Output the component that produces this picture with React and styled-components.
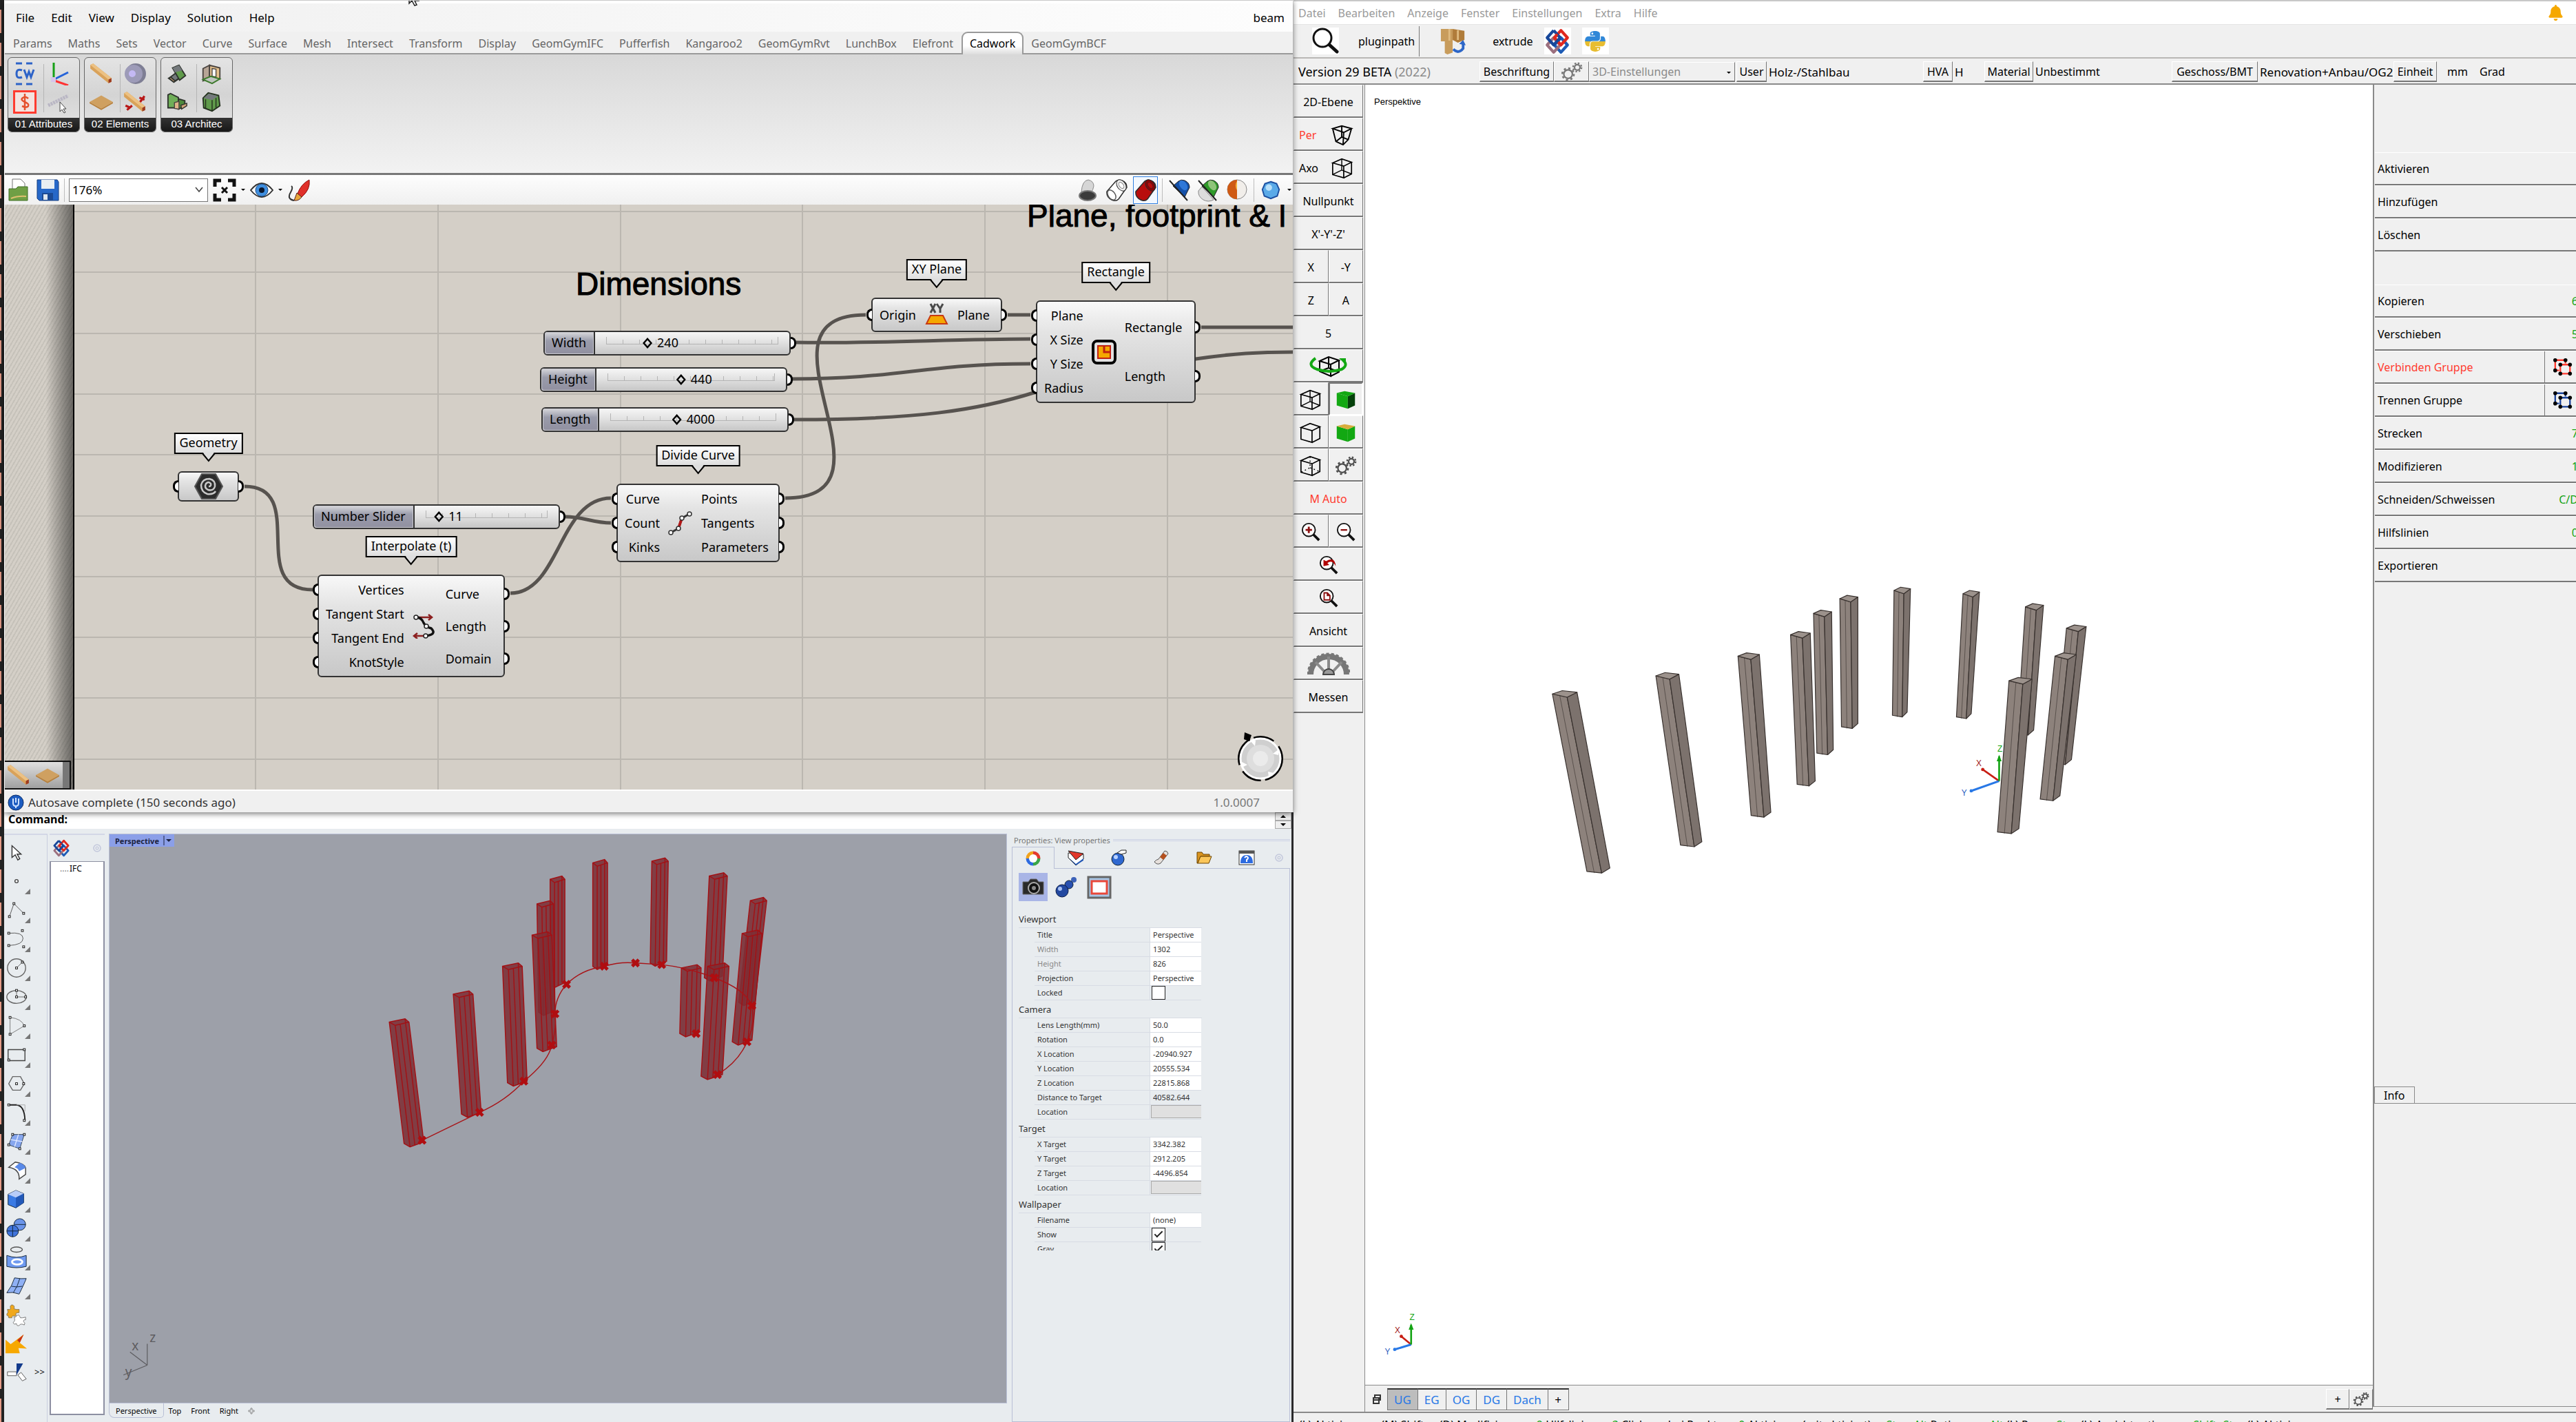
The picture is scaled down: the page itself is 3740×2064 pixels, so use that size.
import React, { useState } from 'react';
import styled, { createGlobalStyle } from 'styled-components';
import { FaPython, FaBell } from 'react-icons/fa';

const Global = createGlobalStyle`
  *, *::before, *::after { box-sizing: border-box; }
  html, body { margin: 0; }
  body { font-family: "Noto Sans", "Open Sans", sans-serif; color: #000; background: #f0f0f0; overflow: hidden; }
  button, input, select { font: inherit; color: inherit; margin: 0; padding: 0; border: 0; border-radius: 0; background: none; outline: none; }
  button { cursor: default; white-space: nowrap; }
  svg { display: block; flex: none; }
`;

const Desktop = styled.main`
  display: grid;
  grid-template-columns: minmax(0, 1878fr) minmax(0, 1862fr);
  height: 100vh;
  overflow: hidden;
`;

const LeftHalf = styled.div`
  display: grid;
  grid-template-columns: 6px minmax(0, 1fr);
  grid-template-rows: minmax(0, 1179fr) minmax(0, 885fr);
`;

const Backdrop = styled.div`
  grid-row: 1 / 3;
  background:
    linear-gradient(#232323, #232323) 2px 0 / 4px 100% no-repeat,
    repeating-linear-gradient(#232323 0 14px, #e79c88 14px 48px);
`;

/* ---------- Grasshopper window ---------- */

const GhWindow = styled.section`
  position: relative;
  z-index: 2;
  display: flex;
  flex-direction: column;
  min-height: 0;
  margin-right: 1px;
  background: #f0f0f0;
  border-top: 1px solid #c8c8c8;
  border-left: 1px solid #fff;
  box-shadow: 0 2px 8px rgba(0, 0, 0, 0.55);
`;

const Pointer = styled.svg`
  position: absolute;
  left: 586px;
  top: 0;
`;

const GhMenu = styled.nav`
  display: flex;
  align-items: center;
  height: 45px;
  padding: 0 12px 0 4px;
  border-top: 4px solid #fff;
  background: linear-gradient(90deg, #f0f0f0, #fdfdfd);
  font-size: 17px;
`;

const GhMenuItem = styled.button`
  padding: 0 12px;
`;

const DocName = styled.span`
  margin-left: auto;
`;

const GhTabs = styled.div`
  display: flex;
  align-items: stretch;
  height: 33px;
  padding-left: 1px;
  border-bottom: 2px solid #9a9a9a;
  background: #f0f0f0;
  color: #666;
  font-size: 16px;
`;

const GhTab = styled.button`
  padding: 2px 12px 0 11px;
  ${(p) => p.$active && `
    margin-bottom: -2px;
    padding: 0 10px 2px;
    color: #000;
    background: linear-gradient(#fff 60%, #dcdcdc);
    border: 2px solid #9a9a9a;
    border-bottom: 0;
    border-radius: 9px 9px 0 0;
  `}
`;

const Ribbon = styled.div`
  display: flex;
  align-items: flex-start;
  gap: 6px;
  height: 175px;
  padding: 4px;
  border-bottom: 3px solid #777;
  background: linear-gradient(#d8d8d8, #f2f2f2);
`;

const RibbonGroup = styled.div`
  width: 105px;
  height: 109px;
  border: 1px solid #666;
  border-radius: 6px;
  overflow: hidden;
  background: linear-gradient(#e4e4e4, #d4d4d4 50%, #e4e4e4);
`;

const RibbonIcons = styled.div`
  display: grid;
  grid-template-columns: 1fr 1fr;
  height: 87px;
  padding: 3px 6px 3px 0;
  background: linear-gradient(#b5b5b5, #b5b5b5) center / 1px 70px no-repeat;
`;

const RibbonButton = styled.button`
  display: grid;
  place-items: center;
`;

const RibbonLabel = styled.div`
  height: 21px;
  line-height: 18px;
  background: linear-gradient(#333, #161616);
  color: #fff;
  font-family: "Liberation Sans", sans-serif;
  font-size: 15px;
  text-align: center;
`;

const GhToolbar = styled.div`
  display: flex;
  align-items: center;
  gap: 6px;
  height: 43px;
  padding: 0 2px;
  background: linear-gradient(#fdfdfd, #f0f0f0);
`;

const ToolButton = styled.button`
  display: grid;
  place-items: center;
  width: 36px;
  height: 40px;
  ${(p) => p.$on && 'border: 1px solid #2f7fe0; background: #f3f8ff;'}
`;

const Spacer = styled.div`
  flex: 1;
`;

const VRule = styled.i`
  width: 1px;
  height: 34px;
  background: #bdbdbd;
`;

const Caret = styled.i`
  width: 0;
  height: 0;
  border: 3px solid transparent;
  border-top-color: #000;
  border-bottom: 0;
`;

const ZoomField = styled.div`
  position: relative;
  width: 202px;
  height: 34px;
  select {
    width: 100%;
    height: 100%;
    padding-left: 4px;
    appearance: none;
    border: 1px solid #777;
    background: #fff;
    font-size: 17px;
  }
  svg { position: absolute; right: 7px; top: 12px; pointer-events: none; }
`;

const Canvas = styled.div`
  position: relative;
  flex: 1;
  min-height: 0;
  overflow: hidden;
  background: #d4cfc7;
`;

const Margin = styled.div`
  position: absolute;
  inset: 0 auto 0 0;
  width: 101px;
  border-right: 2px solid #000;
  background:
    linear-gradient(90deg, transparent 60%, rgba(0, 0, 0, 0.5)),
    repeating-linear-gradient(120deg, #d4cfc7 0 3px, #c6c2ba 3px 5px);
`;

const Drawing = styled.svg`
  position: absolute;
  inset: 0;
  width: 100%;
  height: 100%;
`;

const Scribble = styled.div`
  position: absolute;
  left: ${(p) => p.$x}px;
  top: ${(p) => p.$y}px;
  font: 46px/50px "Liberation Sans", sans-serif;
  -webkit-text-stroke: 1px #000;
  white-space: nowrap;
`;

const Body = styled.div`
  position: absolute;
  left: ${(p) => p.$x}px;
  top: ${(p) => p.$y}px;
  width: ${(p) => p.$w}px;
  height: ${(p) => p.$h}px;
  display: flex;
  padding: 2px 0;
  border: 2px solid #333;
  border-radius: 6px;
  background: linear-gradient(#f8f8f8, #e4e4e4 30%, #c8c8c8);
  font-size: 18px;
  line-height: 24px;
`;

const Ports = styled.div`
  display: flex;
  flex-direction: column;
  flex: ${(p) => (p.$out ? 1 : 'none')};
  min-width: 0;
`;

const Port = styled.div`
  position: relative;
  flex: 1;
  display: flex;
  align-items: center;
  justify-content: ${(p) => (p.$out ? 'flex-start' : 'flex-end')};
  padding-left: ${(p) => (p.$out ? 0 : 10)}px;
  white-space: nowrap;
  &::after {
    content: '';
    position: absolute;
    ${(p) => (p.$out ? 'right: -9px; border-radius: 0 9px 9px 0;' : 'left: -9px; border-radius: 9px 0 0 9px;')}
    top: calc(50% - 9px);
    width: 8px;
    height: 18px;
    border: 3px solid #000;
    ${(p) => (p.$out ? 'border-left-width: 0;' : 'border-right-width: 0;')}
    background: #fff;
  }
`;

const NodeIcon = styled.div`
  align-self: center;
  margin: 0 12px;
`;

const Tag = styled.div`
  position: absolute;
  left: 50%;
  bottom: calc(100% + 27px);
  transform: translateX(-50%);
  height: 31px;
  padding: 0 6px;
  border: 2px solid #000;
  background: linear-gradient(#fff, #dedede);
  line-height: 25px;
  white-space: nowrap;
  svg { position: absolute; left: calc(50% - 10px); top: 27px; }
`;

const SliderBox = styled.div`
  position: absolute;
  left: ${(p) => p.$x}px;
  top: ${(p) => p.$y}px;
  width: 359px;
  height: 36px;
  display: flex;
  border: 2px solid #333;
  border-radius: 6px;
  background: linear-gradient(#f6f6f6, #e2e2e2 45%, #c6c6c6);
  font-size: 18px;
  line-height: 31px;
  &::after {
    content: '';
    position: absolute;
    right: -10px;
    top: 7px;
    width: 8px;
    height: 18px;
    border: 3px solid #000;
    border-left: 0;
    border-radius: 0 9px 9px 0;
    background: #fff;
  }
`;

const SliderName = styled.label`
  padding: 0 11px 0 10px;
  border-right: 2px solid #333;
  border-radius: 4px 0 0 4px;
  background: linear-gradient(#d8d8dc, #9a9cab 40%, #9190a0);
  box-shadow: inset 0 0 0 1px #c9c9cf;
`;

const SliderTrack = styled.div`
  position: relative;
  flex: 1;
  margin: 0 9px;
  &::before {
    content: '';
    position: absolute;
    left: 7px;
    right: 7px;
    top: 7px;
    height: 11px;
    border: 1px solid #b4b4b4;
    border-top: 0;
    background: repeating-linear-gradient(90deg, transparent 0 23px, #b4b4b4 23px 24px) 0 100% / 100% 6px no-repeat;
  }
`;

const Range = styled.input`
  position: relative;
  display: block;
  width: 100%;
  height: 32px;
  appearance: none;
  background: transparent;
  &::-webkit-slider-thumb {
    appearance: none;
    width: 14px;
    height: 16px;
    background: #000;
    clip-path: polygon(evenodd, 50% 0, 100% 50%, 50% 100%, 0 50%, 50% 0, 50% 24%, 22% 50%, 50% 76%, 78% 50%, 50% 24%);
  }
`;

const SliderValue = styled.output`
  position: absolute;
  top: 0;
  margin-left: 12px;
  padding: 0 2px;
  pointer-events: none;
`;

const Palette = styled.div`
  position: absolute;
  left: 0;
  bottom: 0;
  display: flex;
  align-items: center;
  gap: 6px;
  width: 96px;
  height: 42px;
  padding: 0 2px;
  border: 2px solid #111;
  border-left: 0;
  background: linear-gradient(90deg, transparent 84px, #777 84px), linear-gradient(#e0e0e0, #a0a0a0);
`;

const GhStatus = styled.footer`
  display: flex;
  align-items: center;
  gap: 6px;
  height: 33px;
  padding: 2px 48px 0 4px;
  border-top: 2px solid #fff;
  background: #f0f0f0;
  color: #333;
  font-size: 17px;
`;

const Version = styled.span`
  margin-left: auto;
  color: #777;
`;

/* ---------- Rhino window ---------- */

const RhWindow = styled.section`
  display: flex;
  flex-direction: column;
  min-height: 0;
  background: #e8ecef;
  border-right: 3px solid #2a2a2c;
`;

const CommandBar = styled.div`
  display: flex;
  height: 24px;
  background: #fff;
  font-size: 16px;
  label { padding-left: 6px; font-weight: bold; line-height: 20px; }
  input { flex: 1; min-width: 0; padding-left: 4px; }
`;

const Spinner = styled.div`
  display: grid;
  width: 24px;
  button {
    display: grid;
    place-items: center;
    border: 1px solid #aaa;
    background: #eee;
  }
`;

const RhMain = styled.div`
  flex: 1;
  display: grid;
  grid-template-columns: 66px 86px minmax(0, 1fr) 413px;
  min-height: 0;
  padding-top: 7px;
`;

const RhTools = styled.div`
  display: flex;
  flex-direction: column;
  margin-right: 3px;
  padding-top: 4px;
  border-top: 2px solid #d3d7e6;
  border-right: 1px solid #c9cede;
`;

const RhTool = styled.button`
  position: relative;
  width: 40px;
  height: 42px;
  padding-left: 2px;
  &::after {
    content: '';
    display: ${(p) => (p.$plain ? 'none' : 'block')};
    position: absolute;
    right: 2px;
    bottom: 2px;
    border: 4px solid #777;
    border-top-color: transparent;
    border-left-color: transparent;
  }
`;

const MoreTools = styled.span`
  position: absolute;
  left: 44px;
  top: 10px;
  font-size: 13px;
`;

const IfcPanel = styled.div`
  display: flex;
  flex-direction: column;
  margin-right: 6px;
  border-top: 2px solid #d3d7e6;
`;

const IfcTab = styled.div`
  position: relative;
  display: flex;
  align-items: center;
  justify-content: space-between;
  height: 38px;
  padding: 0 4px;
`;

const IfcTree = styled.div`
  flex: 1;
  margin-bottom: 10px;
  padding-left: 13px;
  border: 2px solid #8d90a2;
  border-top-width: 1px;
  background: #fff;
  font-size: 12px;
  line-height: 19px;
  &::before { content: '....'; margin-right: 1px; color: #777; }
`;

const RhViewport = styled.div`
  display: flex;
  flex-direction: column;
  min-height: 0;
`;

const RhScene = styled.div`
  position: relative;
  flex: 1;
  border: 1px solid #b9bfd6;
  background: #9da0a9;
`;

const ViewLabel = styled.button`
  position: absolute;
  left: 0;
  top: 0;
  display: flex;
  align-items: center;
  gap: 6px;
  height: 18px;
  padding: 0 4px 0 8px;
  background: #8b9fe8;
  color: #1c2340;
  font-size: 11px;
  font-weight: bold;
`;

const ViewTabs = styled.div`
  display: flex;
  align-items: center;
  height: 27px;
  font-size: 11px;
`;

const ViewTab = styled.button`
  height: 21px;
  margin-bottom: 6px;
  padding: 0 7px;
  ${(p) => p.$active && 'padding: 0 9px; border: 1px solid #b9bfd6; border-top: 0; border-radius: 0 0 5px 8px;'}
`;

const Props = styled.aside`
  display: flex;
  flex-direction: column;
  padding: 0 2px 0 7px;
  color: #333;
  font-size: 11px;
`;

const PropsTitle = styled.div`
  display: flex;
  align-items: center;
  gap: 4px;
  height: 19px;
  padding-left: 3px;
  color: #777;
  &::after { content: ''; flex: 1; height: 3px; border: 1px solid #cdd2e6; border-width: 1px 0; }
`;

const PropsTabs = styled.div`
  display: grid;
  grid-template-columns: repeat(6, 62px) 1fr;
  height: 32px;
`;

const PropsTab = styled.button`
  display: grid;
  place-items: center;
  border-bottom: 1px solid #b9bfd6;
  ${(p) => p.$active && 'border: 1px solid #b9bfd6; border-bottom: 0;'}
`;

const PropsBody = styled.div`
  flex: 1;
  padding-left: 9px;
  border: 1px solid #b9bfd6;
  border-top: 0;
`;

const PropsKinds = styled.div`
  display: flex;
  gap: 6px;
  height: 60px;
  padding-top: 6px;
`;

const Kind = styled.button`
  display: grid;
  place-items: center;
  width: 42px;
  height: 41px;
  background: ${(p) => (p.$on ? '#a9b5e6' : 'none')};
`;

const PropsList = styled.div`
  height: 494px;
  overflow: hidden;
`;

const PropsHead = styled.h3`
  margin: 0;
  width: 266px;
  height: 26px;
  font-size: 13px;
  font-weight: normal;
  line-height: 27px;
  border-bottom: 1px solid #d8dce4;
`;

const PropRow = styled.div`
  display: grid;
  grid-template-columns: 168px 74px;
  width: 242px;
  height: 21px;
  margin-left: 23px;
  border-bottom: 1px solid #d8dce4;
  line-height: 20px;
  label { padding-left: 4px; color: ${(p) => (p.$dim ? '#888' : '#333')}; border-right: 1px solid #d8dce4; }
`;

const PropText = styled.input`
  width: 74px;
  height: 20px;
  padding-left: 4px;
  background: ${(p) => (p.$flat ? 'transparent' : '#fff')};
`;

const PropPush = styled.button`
  height: 19px;
  margin-left: 1px;
  border: 1px solid #aaa;
  border-right: 0;
  background: #e0e0e0;
`;

const PropCheck = styled.input`
  appearance: none;
  width: 20px;
  height: 20px;
  margin-left: 2px;
  border: 1px solid #222;
  background: #fff;
  &:checked::after {
    content: '';
    display: block;
    width: 12px;
    height: 6px;
    margin: 4px 3px;
    border: solid #222;
    border-width: 0 0 2px 2px;
    transform: rotate(-45deg);
  }
`;

/* ---------- cadwork window ---------- */

const CwWindow = styled.section`
  display: flex;
  flex-direction: column;
  min-height: 0;
  background: #f0f0f0;
  font-size: 16px;
`;

const CwMenu = styled.nav`
  display: flex;
  align-items: center;
  gap: 18px;
  height: 36px;
  padding: 0 18px 0 7px;
  border-top: 2px solid #c8c8c8;
  border-bottom: 1px solid #e4e4e4;
  background: #fff;
  color: #9a9a9a;
`;

const CwToolbar = styled.div`
  display: flex;
  align-items: center;
  gap: 16px;
  height: 49px;
  padding-left: 1px;
  border-bottom: 2px solid #b9b7b5;
`;

const CwAction = styled.button`
  display: flex;
  align-items: center;
  gap: ${(p) => p.$gap || 0}px;
  height: 44px;
  padding: ${(p) => p.$pad || '0'};
  ${(p) => p.$rule && 'border-right: 1px solid #777;'}
`;

const Plate = styled.span`
  display: grid;
  place-items: center;
  width: 39px;
  height: 39px;
  background: #fff;
`;

const CwAttributes = styled.div`
  display: flex;
  align-items: center;
  height: 38px;
  padding: 2px 0 0 7px;
  border-bottom: 2px solid #8a8a8a;
`;

const Build = styled.div`
  width: 263px;
  font-size: 18px;
  span { color: #8a8a8a; }
`;

const Bevel = styled.button`
  display: flex;
  align-items: center;
  justify-content: center;
  height: 30px;
  width: ${(p) => p.$w}px;
  padding-top: 1px;
  border: 1px solid #fff;
  border-right-color: #777;
  border-bottom: 2px solid #777;
`;

const AttrValue = styled.span`
  width: ${(p) => p.$w}px;
  padding-left: 3px;
  font-size: ${(p) => (p.$small ? 16 : 17)}px;
  white-space: nowrap;
`;

const Preset = styled.div`
  position: relative;
  width: 214px;
  select {
    width: 212px;
    height: 29px;
    padding-left: 4px;
    appearance: none;
    border: 1px solid #fff;
    border-right-color: #777;
    border-bottom: 2px solid #777;
    color: #8a8a8a;
  }
  i { position: absolute; right: 8px; top: 14px; }
`;

const CwMain = styled.div`
  flex: 1;
  display: grid;
  grid-template-columns: 104px minmax(0, 1fr) 295px;
  min-height: 0;
`;

const CwTools = styled.div`
  display: grid;
  grid-template-columns: 1fr 1fr;
  grid-auto-rows: 48px;
  align-content: start;
  padding-right: 2px;
  border-right: 1px solid #8a8a8a;
`;

const CwTool = styled.button`
  display: flex;
  align-items: center;
  justify-content: ${(p) => (p.$spread ? 'space-between' : 'center')};
  padding: ${(p) => (p.$spread ? '2px 12px 0 7px' : '2px 0 0')};
  grid-column: ${(p) => (p.$half ? 'auto' : 'span 2')};
  color: ${(p) => (p.$red ? '#ff3b2f' : '#000')};
  border: 1px solid #fff;
  border-right-color: #777;
  border-bottom: 2px solid #777;
  ${(p) => p.$pressed && 'border: 2px solid #fff; border-top-color: #777; border-left-color: #777;'}
`;

const CwCenter = styled.div`
  display: flex;
  flex-direction: column;
  min-height: 0;
`;

const CwScene = styled.div`
  position: relative;
  flex: 1;
  background: #fff;
  border-bottom: 1px solid #8a8a8a;
`;

const SceneName = styled.span`
  position: absolute;
  left: 13px;
  top: 17px;
  font: 13px/16px "Liberation Sans", sans-serif;
`;

const Floors = styled.div`
  display: flex;
  align-items: center;
  height: 38px;
  padding: 2px 0 0 10px;
`;

const Floor = styled.button`
  height: 32px;
  min-width: 31px;
  padding: 0 9px;
  border: 1px solid #777;
  border-top: 2px solid #333;
  margin-right: -1px;
  font-size: 17px;
  color: ${(p) => (p.$plus ? '#000' : '#2878e6')};
  background: ${(p) => (p.$active ? '#bdbdbd' : '#f0f0f0')};
`;

const StackIcon = styled.span`
  width: 22px;
`;

const CwCommands = styled.aside`
  display: flex;
  flex-direction: column;
  margin: 0 0 7px 0;
  border-left: 2px solid #8a8a8a;
  border-bottom: 1px solid #8a8a8a;
  overflow: hidden;
`;

const CommandList = styled.div`
  display: grid;
  grid-auto-rows: 48px;
  padding: 98px 0 0 1px;
  width: 310px;
`;

const Command = styled.div`
  display: flex;
  align-items: stretch;
  border-top: 1px solid #fff;
  border-bottom: 2px solid #777;
  button { flex: 1; padding: 1px 0 0 4px; text-align: left; color: ${(p) => (p.$red ? '#ff3b2f' : '#000')}; }
  span { align-self: center; padding-right: 14px; color: #13a313; }
`;

const CommandGap = styled.div``;

const CommandIcon = styled.i`
  display: grid;
  place-items: center;
  width: 63px;
  padding-right: 10px;
  border-left: 1px solid #777;
`;

const Info = styled.div`
  flex: 1;
  display: flex;
  flex-direction: column;
  padding-top: 732px;
`;

const InfoTab = styled.button`
  align-self: flex-start;
  height: 24px;
  padding: 0 13px;
  border: 1px solid #8a8a8a;
  border-bottom: 0;
`;

const InfoBody = styled.div`
  flex: 1;
  border-top: 1px solid #8a8a8a;
`;

const CwStatus = styled.footer`
  display: flex;
  gap: 22px;
  height: 15px;
  padding: 6px 8px 0;
  border-top: 2px solid #8a8a8a;
  overflow: hidden;
  white-space: nowrap;
  line-height: 22px;
  b { color: #13a313; font-weight: normal; }
`;

/* ---------- drawings ---------- */

const Ico = ({ s = 34, vb = '0 0 34 34', children }) => (
  <svg width={s} height={s} viewBox={vb} fill="none" aria-hidden="true">{children}</svg>
);

const Beam = ({ s = 36, saw }) => (
  <Ico s={s}>
    <path d="M2 5l4-2 25 20v5l-4 2L2 10z" fill="#d9a25a" />
    <path d="M2 5l4-2 25 20-4 2z" fill="#ecc183" />
    <path d="M27 25l4-2v5l-4 2z" fill="#9c3a20" />
    {saw && <path d="M4 22l7 3M6 28l7-6M23 11l7 3M24 17l6-8" stroke="#b81818" strokeWidth="3" />}
  </Ico>
);
const Board = ({ s = 36 }) => (
  <Ico s={s}>
    <path d="M1 17L17 8l16 9-16 9z" fill="#cfa060" />
    <path d="M1 17l16 9 16-9v2l-16 9-16-9z" fill="#b8803a" />
  </Ico>
);
const CwMark = () => (
  <Ico>
    <path d="M4 2h9M19 2h9M4 32h9M19 32h9" stroke="#2d63c8" strokeWidth="3" />
    <path d="M13 12q-8-3-8 5t8 5" stroke="#2d63c8" strokeWidth="3" />
    <path d="M16 11l4 11 3-8 3 8 4-11" stroke="#2d63c8" strokeWidth="3" />
  </Ico>
);
const Dollar = () => (
  <Ico>
    <rect x="1.500" y="1.500" width="31" height="31" fill="#f3e3df" stroke="#ff3b2f" strokeWidth="3" />
    <path d="M22 12q-4-4-8-1t3 6 5 6-9 0M17 5v24" stroke="#e5502c" strokeWidth="2.500" />
  </Ico>
);
const Axes = () => (
  <Ico>
    <path d="M10 25V1" stroke="#16a016" strokeWidth="3" />
    <path d="M11 25l20-10" stroke="#2563d9" strokeWidth="3" />
    <path d="M11 27l20 7" stroke="#f33" strokeWidth="3" />
    <rect x="6" y="22" width="7" height="7" fill="#d6c4ea" />
  </Ico>
);
const Rod = () => (
  <Ico>
    <path d="M2 22L31 8" stroke="#b9b6c4" strokeWidth="5" strokeDasharray="3 1" />
    <path d="M19 17v14l3-3 3 5 2-1-3-5h4z" fill="#fff" stroke="#444" />
  </Ico>
);
const Sphere = () => (
  <Ico>
    <circle cx="18" cy="17" r="15" fill="#7e7e94" />
    <circle cx="15" cy="17" r="13" fill="#9d9bb8" />
    <circle cx="13" cy="17" r="5" fill="#c4b9f4" />
  </Ico>
);
const HouseRoof = () => (
  <Ico s={32}>
    <path d="M3 24l9-5 8 5-9 6z" fill="#cfa27a" stroke="#2f332e" strokeWidth="2" />
    <path d="M6 22l8-6 5 8-6 4z" fill="#74797c" stroke="#2f332e" strokeWidth="2" />
    <path d="M9 8l10-4 10 16-9 7z" fill="#5f9a4a" stroke="#2f332e" strokeWidth="2" />
    <path d="M9 8l10-4 5 8-11 3z" fill="#74797c" />
  </Ico>
);
const HouseOpen = () => (
  <Ico s={32}>
    <path d="M4 9l10-5v20L4 28z" fill="#b7a596" stroke="#4b4540" strokeWidth="2" />
    <path d="M14 4l16 4v17l-16-3z" fill="#e4c08c" stroke="#4b4540" strokeWidth="2" />
    <path d="M18 9l6 1v12l-6-1z" fill="#fff" stroke="#4b4540" strokeWidth="1.500" />
    <path d="M4 26l12-5 14 4-12 7z" fill="#bfc4be" stroke="#3d7a2c" strokeWidth="2" />
  </Ico>
);
const HouseWall = () => (
  <Ico s={32}>
    <path d="M2 6l4-2 12 6v16L2 26z" fill="#6fae58" stroke="#2f332e" strokeWidth="2" />
    <path d="M18 12l10 3v9l-10 4z" fill="#4d8a3c" stroke="#2f332e" strokeWidth="2" />
    <path d="M12 18l7-2v12l-7-1z" fill="#e0b48a" stroke="#4b4540" strokeWidth="1.500" />
    <path d="M22 22l9-3v4l-8 5z" fill="#cfa27a" stroke="#2f332e" strokeWidth="1.500" />
  </Ico>
);
const HouseBox = () => (
  <Ico s={32}>
    <path d="M4 11l8-8 16 4 2 16-12 8-13-5z" fill="#5f9a4a" stroke="#24301f" strokeWidth="2" />
    <path d="M5 11l8-7 14 4-9 6z" fill="#74797c" />
    <path d="M18 14v17M8 13v14M24 11v15" stroke="#24301f" strokeWidth="1.500" />
  </Ico>
);
const OpenDoc = () => (
  <Ico>
    <path d="M8 1h12l6 6v18H8z" fill="#fff" stroke="#777" />
    <path d="M3 15h10l3-3h14v20H3z" fill="#6f9f45" stroke="#3f6e25" />
    <path d="M6 29q10-4 22-3" stroke="#e0c070" strokeWidth="2" />
  </Ico>
);
const Save = () => (
  <Ico>
    <path d="M2 2h29l2 3v27H5l-3-3z" fill="#2768c8" stroke="#163e80" />
    <path d="M8 2h19v13H8z" fill="#e9eef2" />
    <path d="M9 21h16v11H9z" fill="#1c4a94" />
    <path d="M11 23h6v8h-6z" fill="#dfe6ee" />
  </Ico>
);
const Extents = () => (
  <Ico>
    <path d="M3 12V3h9M22 3h9v9M31 22v9h-9M12 31H3v-9" stroke="#111" strokeWidth="5" />
    <path d="M13 13l8 8M21 13l-8 8" stroke="#111" strokeWidth="3" />
  </Ico>
);
const Eye = () => (
  <Ico>
    <path d="M1 17Q17-3 33 17 17 37 1 17z" fill="#fff" stroke="#333" strokeWidth="2" />
    <circle cx="17" cy="17" r="9" fill="#3f8fe0" stroke="#17467f" />
    <circle cx="17" cy="17" r="4" fill="#0a1830" />
  </Ico>
);
const Brush = () => (
  <Ico>
    <path d="M15 22Q20 8 32 2q2 14-11 25z" fill="#e0302a" stroke="#8c1010" />
    <path d="M14 21l7 6q-4 6-11 5z" fill="#e8a63a" stroke="#522" />
    <path d="M10 32Q-1 30 5 20q4-7 1-9" stroke="#333" strokeWidth="2" />
  </Ico>
);
const Can = ({ side, cap, hole }) => (
  <Ico s={34}>
    <path d="M3 19L16 4q4-3 9-1 7 3 7 10L20 30q-4 4-10 1-8-4-7-12z" fill={side} stroke="#2c2c2c" strokeWidth="1.500" />
    <ellipse cx="24" cy="10" rx="6" ry="9" transform="rotate(-35 24 10)" fill={cap} stroke="#2c2c2c" />
    <ellipse cx="24" cy="10" rx="3" ry="5" transform="rotate(-35 24 10)" fill={side} stroke="#2c2c2c" strokeOpacity=".6" />
    {hole && <ellipse cx="10" cy="24" rx="5" ry="8" transform="rotate(-35 10 24)" stroke="#555" strokeWidth="1.500" />}
  </Ico>
);
const CutCan = ({ side, cap, rest }) => (
  <Ico s={34}>
    {rest && <path d="M3 18L8 12 25 31q-8 4-15 0-8-5-7-13z" fill="#dcdcdc" stroke="#888" />}
    <path d="M8 11L16 4q4-3 9-1 7 3 7 10L25 27z" fill={side} stroke="#222" />
    <ellipse cx="23" cy="10" rx="5" ry="8" transform="rotate(-35 23 10)" fill={cap} />
    <path d="M3 3l26 29" stroke="#222" strokeWidth="2" />
  </Ico>
);
const Ghost = () => (
  <Ico>
    <path d="M8 20Q9 3 18 2q8 2 8 9-1 6-4 10z" fill="#d6d6d6" stroke="#8a8a8a" />
    <ellipse cx="17" cy="25" rx="12" ry="7" fill="#3b3b3b" stroke="#777" strokeWidth="2" />
  </Ico>
);
const HalfBall = () => (
  <Ico>
    <circle cx="17" cy="16" r="14" fill="#f1eeea" stroke="#888" />
    <path d="M17 2a14 14 0 000 28z" fill="#cf5a14" />
    <path d="M17 4a9 10 0 000 13z" fill="#f6b23c" />
  </Ico>
);
const BlueGem = () => (
  <Ico s={32}>
    <path d="M17 4l9 3 4 9-3 10-10 4-10-4L4 16l4-9z" fill="#5aaae8" stroke="#1c4fa0" strokeWidth="2" />
    <circle cx="14" cy="13" r="5" fill="#b8e0fa" />
  </Ico>
);
const IfcLogo = ({ s = 36 }) => (
  <Ico s={s} vb="0 0 36 36">
    <g strokeWidth="4" strokeLinejoin="round">
      <path d="M23 13l9 10-9 10-9-10z" stroke="#1d5bb5" />
      <path d="M13 13l9 10-9 10-9-10z" stroke="#9b6f7e" />
      <path d="M23 3l9 10-9 10-9-10z" stroke="#e0281e" />
      <path d="M13 3l9 10M13 3L4 13l9 10 9-10" stroke="#17479a" />
      <path d="M14 13l4-5" stroke="#e0281e" />
    </g>
  </Ico>
);
const Gears = ({ s = 36, c = '#4c4c4c' }) => (
  <Ico s={s} vb="0 0 36 36">
    <circle cx="12" cy="22" r="7" stroke={c} strokeWidth="2.500" />
    <circle cx="12" cy="22" r="9.500" stroke={c} strokeWidth="3" strokeDasharray="3.500 3.960" />
    <circle cx="27" cy="11" r="4.500" stroke={c} strokeWidth="2.500" />
    <circle cx="27" cy="11" r="7" stroke={c} strokeWidth="2.500" strokeDasharray="2.750 2.750" />
  </Ico>
);
const Cog = ({ s = 18 }) => (
  <Ico s={s} vb="0 0 18 18">
    <circle cx="9" cy="9" r="6.500" stroke="#c3c8dc" strokeWidth="2" />
    <circle cx="9" cy="9" r="2.500" stroke="#c3c8dc" strokeWidth="1.500" />
  </Ico>
);
const Magnifier = () => (
  <Ico s={39} vb="0 0 39 39">
    <circle cx="15" cy="15" r="13" stroke="#111" strokeWidth="3" />
    <path d="M25 25l11 10" stroke="#111" strokeWidth="5" strokeLinecap="round" />
  </Ico>
);
const Cube = ({ kind = 'wire' }) => {
  const solid = kind === 'green' || kind === 'gold';
  return (
    <Ico s={34} vb="0 0 36 36">
      {solid ? (
        <>
          <path d="M4 8l17 5v19L4 27z" fill="#12a812" />
          <path d="M21 13l11-5v19l-11 5z" fill={kind === 'gold' ? '#12a812' : '#04400a'} />
          <path d="M4 8l12-3 16 3-11 5z" fill={kind === 'gold' ? '#d8ac3c' : '#12a812'} />
        </>
      ) : kind === 'per' ? (
        <path d="M3 8l14-4 15 4-12 6zM3 8l5 20 11 5 8-8 5-17M20 14l-1 19M17 4v17l-9 7M17 21l10 4" stroke="#000" strokeWidth="2" />
      ) : (
        <>
          <path d="M3 10l14-6 15 5-12 6zM3 10v18l17 5V15M32 9v18l-12 6" stroke="#000" strokeWidth="1.800" />
          {kind === 'wire' && <path d="M17 4v17L3 28M17 21l15 6" stroke="#000" strokeWidth="1.500" />}
          {kind === 'dots' && <path d="M17 4v17L3 28M17 21l15 6" stroke="#000" strokeWidth="1.500" strokeDasharray="2 4" />}
        </>
      )}
    </Ico>
  );
};
const Orbit = () => (
  <svg width="58" height="32" viewBox="0 0 58 32" fill="none" aria-hidden="true">
    <path d="M16 8l13-6 15 5-12 6zM16 8v15l16 7V13M44 7v17l-12 6M29 2v16l-13 5M29 18l15 6" stroke="#000" strokeWidth="2" />
    <path d="M10 4Q-4 14 12 20q18 6 36 0 10-6 2-13" stroke="#13a813" strokeWidth="4" />
    <path d="M44 4h10v9z" fill="#13a813" />
  </svg>
);
const Lens = ({ kind }) => (
  <Ico s={28} vb="0 0 30 30">
    <circle cx="12" cy="12" r="10" stroke="#111" strokeWidth="2" fill="#fff" />
    <path d="M19 19l9 9" stroke="#111" strokeWidth="4" />
    {kind === '+' && <path d="M7 12h10M12 7v10" stroke="#8c1010" strokeWidth="3" />}
    {kind === '-' && <path d="M7 12h10" stroke="#8c1010" strokeWidth="2.500" />}
    {kind === 'back' && <path d="M7 7v10l9-2-3-3q8-6 13 5Q25 1 11 9z" fill="#b00000" />}
    {kind === 'page' && <path d="M8 7h5l4 4v7H8zM13 7v4h4" stroke="#8c1010" strokeWidth="2" />}
  </Ico>
);
const SawBlade = () => (
  <svg width="62" height="34" viewBox="0 0 62 34" fill="none" aria-hidden="true">
    <path d="M5 32a26 26 0 0152 0" stroke="#777" strokeWidth="8" />
    <path d="M2 32a29 29 0 0158 0" stroke="#777" strokeWidth="5" strokeDasharray="4 3" />
    <path d="M31 26V6M26 29L12 14M36 29l14-15" stroke="#8a8a8a" strokeWidth="4" />
    <path d="M23 32a8 8 0 0116 0z" fill="#999" stroke="#444" strokeWidth="2" />
  </svg>
);
const GroupIcon = ({ c }) => (
  <Ico s={28} vb="0 0 30 30">
    <path d="M3 4h16v5M3 4v16h6" stroke={c} strokeWidth="2.500" />
    <path d="M11 11h15v14H11z" stroke={c} strokeWidth="2.500" />
    {[[3, 4], [19, 4], [3, 20], [11, 11], [26, 11], [11, 25], [26, 25]].map(([x, y]) => <circle key={`${x}-${y}`} cx={x} cy={y} r="3" fill="#000" />)}
  </Ico>
);
const WoodTool = () => (
  <Ico s={38} vb="0 0 40 40">
    <path d="M1 1h18v36l-8 3-4-2V20H1z" fill="#c89c5c" />
    <path d="M19 1l18 3v14l-10 4-8-4z" fill="#b07c3a" />
    <path d="M14 1v18M27 3v15" stroke="#e0bb80" strokeWidth="3" />
    <path d="M20 32q8 8 15-1V22" stroke="#2c66c8" strokeWidth="4" />
    <path d="M29 24l6-6 4 8z" fill="#2c66c8" />
  </Ico>
);
const Hex = () => (
  <Ico s={42} vb="0 0 42 42">
    <path d="M11 3h20l10 18-10 18H11L1 21z" fill="#2c2c2c" stroke="#555" strokeWidth="2" />
    <path d="M21 21q4 0 3-4-3-4-7 0-3 6 3 9 8 2 10-5 1-9-8-11-10 0-12 9 0 10 9 13 9 1 12-4" stroke="#c9c9c9" strokeWidth="2.500" />
  </Ico>
);
const XyIcon = () => (
  <Ico s={36} vb="0 0 36 36">
    <path d="M9 2l7 13M16 2L9 15M18 2l5 7 4-7M23 9v6" stroke="#4a4a4a" strokeWidth="3" />
    <path d="M9 19h18l6 12H3z" fill="#f5a800" stroke="#c83a12" strokeWidth="2" />
  </Ico>
);
const RectIcon = () => (
  <Ico s={36} vb="0 0 36 36">
    <rect x="2" y="2" width="32" height="32" rx="6" fill="#e2e2e2" stroke="#000" strokeWidth="4" />
    <rect x="9" y="9" width="18" height="18" fill="#f5a800" stroke="#c02010" strokeWidth="2" />
    <path d="M18 9v9h9" stroke="#c02010" strokeWidth="3" />
  </Ico>
);
const DivideIcon = () => (
  <Ico s={36} vb="0 0 36 36">
    <path d="M4 32l11-6 5-15 11-6" stroke="#333" strokeWidth="3" />
    <path d="M15 26l5-15" stroke="#b01818" strokeWidth="4" />
    {[[4, 32], [15, 26], [20, 11], [31, 5]].map(([x, y]) => <circle key={x} cx={x} cy={y} r="3" fill="#fff" stroke="#333" strokeWidth="1.500" />)}
  </Ico>
);
const InterpIcon = () => (
  <Ico s={36} vb="0 0 36 36">
    <path d="M5 5h22M23 1l5 4-5 4M20 32H2M7 28l-5 4 5 4" stroke="#8c2020" strokeWidth="2.500" />
    <path d="M5 5q8 0 11 8 3 6 11 8 9 9-8 11" stroke="#111" strokeWidth="3.500" />
    {[[5, 5], [20, 18], [19, 32]].map(([x, y]) => <circle key={y} cx={x} cy={y} r="3" fill="#fff" stroke="#222" strokeWidth="1.500" />)}
  </Ico>
);
const Compass = ({ x, y }) => (
  <g transform={`translate(${x} ${y})`}>
    <circle r="31" fill="none" stroke="#000" strokeWidth="4" strokeDasharray="42 6 30 10" />
    <circle r="29" fill="#cfcfcf" stroke="#fff" strokeWidth="3" />
    <circle r="20" fill="#dedede" />
    <circle r="11" fill="#ebebeb" />
    <path d="M-23-38l10 4-3 9-8-3z" fill="#000" />
    <path d="M-15-26l8 0-1 8zM26-13l0 8-8-2zM-27 13l0-8 8 4zM12 27l-1-8 8 2z" fill="#fff" />
  </g>
);

/* Rhino side-bar glyphs, on a 34 unit square */
const handles = (pts) => pts.map(([x, y], i) => <rect key={i} x={x - 1.5} y={y - 1.5} width="3" height="3" fill="#fff" stroke="#111" />);
const rhinoTools = [
  ['Select', <path d="M10 7v18l5-4 4 8 3-2-4-7h6z" fill="#fff" stroke="#333" strokeWidth="1.500" />, true],
  ['Point', <circle cx="17" cy="17" r="2.500" fill="#fff" stroke="#444" strokeWidth="1.500" />],
  ['Polyline', <><path d="M6 27l7-20 15 15" stroke="#555" />{handles([[6, 27], [13, 7], [28, 22]])}</>],
  ['Curve', <><path d="M5 8q22-2 22 8t-22 11" stroke="#555" />{handles([[5, 8], [26, 4], [5, 27], [28, 29]])}</>],
  ['Circle', <><circle cx="17" cy="17" r="14" stroke="#666" strokeWidth="1.500" /><path d="M17 17l9-9" stroke="#666" />{handles([[17, 17], [26, 8]])}</>],
  ['Ellipse', <><ellipse cx="17" cy="17" rx="15" ry="10" stroke="#666" strokeWidth="1.500" /><path d="M17 17V7M17 17h14" stroke="#666" />{handles([[17, 17], [17, 7], [31, 17]])}</>],
  ['Arc', <><path d="M7 4q18 2 22 13L7 30z" stroke="#777" />{handles([[7, 4], [29, 17], [7, 30]])}</>],
  ['Rectangle', <><path d="M4 9h26v17H4z" stroke="#444" strokeWidth="1.500" />{handles([[29, 9], [5, 25]])}</>],
  ['Polygon', <><path d="M11 6h12l6 11-6 10H11L5 17z" stroke="#666" strokeWidth="1.500" />{handles([[17, 17], [28, 17]])}</>],
  ['Fillet', <><path d="M5 5h12q12 1 13 23" stroke="#222" strokeWidth="2" /><path d="M17 5h13v10" stroke="#aaa" />{handles([[5, 5], [29, 29]])}</>],
  ['Surface', <><path d="M11 6h18l-7 22L5 22z" fill="#86a6ee" stroke="#345" /><path d="M20 6l-6 19M8 14l18 3" stroke="#dfe8ff" strokeWidth="1.500" />{handles([[11, 6], [29, 6], [22, 28], [5, 22]])}</>],
  ['Loft', <><path d="M5 12l10-8q14 2 16 9v10l-10 7q1-15-16-18z" fill="#fff" stroke="#444" strokeWidth="1.500" /><path d="M14 12l8-7q8 3 9 8l-10 5q-1-4-7-6z" fill="#5a8ae8" /></>],
  ['Box', <><path d="M4 9l12-6 12 5v14l-12 8-12-5z" fill="#3a7ae4" stroke="#123" /><path d="M4 9l12-6 12 5-12 6z" fill="#b8ccf8" /><path d="M16 14v16l12-8V8z" fill="#2258b8" /></>],
  ['Solids', <><circle cx="22" cy="11" r="9" fill="#6a94ea" stroke="#123" /><circle cx="11" cy="21" r="9" fill="#3f74dc" stroke="#123" /><path d="M2 21h18M11 12v18M14 11h17" stroke="#123" /></>],
  ['Project', <><ellipse cx="17" cy="5" rx="9" ry="4" stroke="#555" strokeWidth="1.500" /><path d="M2 14q15 6 30 0v17q-15 4-30 0z" fill="#6f9af0" stroke="#123" /><ellipse cx="18" cy="24" rx="8" ry="4" stroke="#fff" strokeWidth="3" /></>],
  ['Mesh', <><path d="M14 4q10 2 18 1-3 8-11 24-10-4-19-2 8-10 12-23z" fill="#8fb0f4" stroke="#123" /><path d="M9 17q8 2 17 0M22 5q-3 12-10 22" stroke="#123" /></>],
  ['Puzzle', <><path d="M3 8q3 1 5-1-2-5 2-6 5 1 3 6 4 2 8 1v5q-6 0-5 3 1 3-3 2-4 0-3 3H5q0-4-3-4 0-4 2-4z" fill="#f0a81c" stroke="#875" /><path d="M13 20q3 1 4-2 4-3 5 1 0 3 4 2l5-1v4q-4 0-3 3 3 2 1 5-6-3-8 1-4 1-4-3-5 2-5-2 4-3 1-8z" fill="#fff" stroke="#777" /></>, true],
  ['Explode', <><path d="M0 10l8 7L28 2l-6 13 11 9-13-1 2 8H0z" fill="#f7a800" /><path d="M18 11l10-9-6 13z" fill="#c8321a" /></>, true],
  ['Trim', <><path d="M3 15h14v6H3zM19 20l5-4 8 10-6 3z" fill="#fff" stroke="#555" /><path d="M17 2h10L17 20z" fill="#123a8c" /></>, true],
];

const WIRES = [
  'M356 706C450 706 358 856 455 856',
  'M822 750C848 750 862 759 888 759',
  'M742 861C814 861 812 723 888 723',
  'M1141 723C1322 723 1077 457 1258 457',
  'M1464 457H1497',
  'M1157 497C1270 499 1384 492 1497 492',
  'M1151 550C1310 550 1340 528 1497 528',
  'M1154 609C1330 609 1420 596 1505 569C1600 540 1660 532 1737 521C1790 513 1830 511 1880 511',
  'M1745 475H1880',
];
const VERTICALS = [372, 637, 902, 1166, 1431, 1696];
const HORIZONTALS = [307, 395, 484, 572, 660, 749, 837, 925, 1013, 1102];

/* Upper-left corner of the visible part of the definition */
const VIEW = { x: 8, y: 297 };
const pan = `translate(${-VIEW.x} ${-VIEW.y})`;

const tagPointer = (
  <svg width="20" height="14" viewBox="0 0 20 14" aria-hidden="true">
    <path d="M2 0l8 12 8-12z" fill="#dedede" />
    <path d="M1 1l9 11 9-11" fill="none" stroke="#000" strokeWidth="2" />
  </svg>
);

function Component({ x, y, w, h, name, ins, outs, icon }) {
  return (
    <Body $x={x - VIEW.x} $y={y - VIEW.y} $w={w} $h={h}>
      <Tag>{name}{tagPointer}</Tag>
      <Ports>{ins.map((t, i) => <Port key={i}>{t}</Port>)}</Ports>
      <NodeIcon>{icon}</NodeIcon>
      <Ports $out>{outs.map((t, i) => <Port key={i} $out>{t}</Port>)}</Ports>
    </Body>
  );
}

function Slider({ x, y, name, max, start }) {
  const [value, setValue] = useState(start);
  const id = `slider-${name.replace(' ', '-')}`;
  const f = value / max;
  return (
    <SliderBox $x={x - VIEW.x} $y={y - VIEW.y}>
      <SliderName htmlFor={id}>{name}</SliderName>
      <SliderTrack>
        <Range id={id} type="range" min="0" max={max} value={value} onChange={(e) => setValue(+e.target.value)} />
        <SliderValue htmlFor={id} style={{ left: `calc(7px + (100% - 14px) * ${f})` }}>{value}</SliderValue>
      </SliderTrack>
    </SliderBox>
  );
}

function Grasshopper() {
  return (
    <GhWindow>
      <Pointer width="16" height="8" viewBox="0 0 16 8" aria-hidden="true">
        <path d="M1-8v12l4-4 4 7 3-1-3-6h5z" fill="#fff" stroke="#222" strokeWidth="1.500" />
      </Pointer>
      <GhMenu>
        {['File', 'Edit', 'View', 'Display', 'Solution', 'Help'].map((t) => <GhMenuItem key={t}>{t}</GhMenuItem>)}
        <DocName>beam</DocName>
      </GhMenu>
      <GhTabs>
        {['Params', 'Maths', 'Sets', 'Vector', 'Curve', 'Surface', 'Mesh', 'Intersect', 'Transform', 'Display', 'GeomGymIFC', 'Pufferfish', 'Kangaroo2', 'GeomGymRvt', 'LunchBox', 'Elefront', 'Cadwork', 'GeomGymBCF'].map((t) => (
          <GhTab key={t} $active={t === 'Cadwork'}>{t}</GhTab>
        ))}
      </GhTabs>
      <Ribbon>
        {[
          ['01 Attributes', [<CwMark />, <Axes />, <Dollar />, <Rod />]],
          ['02 Elements', [<Beam />, <Sphere />, <Board />, <Beam saw />]],
          ['03 Architec', [<HouseRoof />, <HouseOpen />, <HouseWall />, <HouseBox />]],
        ].map(([label, icons]) => (
          <RibbonGroup key={label}>
            <RibbonIcons>{icons.map((ic, i) => <RibbonButton key={i}>{ic}</RibbonButton>)}</RibbonIcons>
            <RibbonLabel>{label}</RibbonLabel>
          </RibbonGroup>
        ))}
      </Ribbon>
      <GhToolbar>
        <ToolButton><OpenDoc /></ToolButton>
        <ToolButton><Save /></ToolButton>
        <VRule />
        <ZoomField>
          <select aria-label="Zoom" defaultValue="176%"><option>176%</option></select>
          <svg width="12" height="9" viewBox="0 0 12 9"><path d="M1 1l5 6 5-6" fill="none" stroke="#444" strokeWidth="1.500" /></svg>
        </ZoomField>
        <ToolButton><Extents /></ToolButton>
        <Caret />
        <ToolButton><Eye /></ToolButton>
        <Caret />
        <ToolButton><Brush /></ToolButton>
        <Spacer />
        <ToolButton><Ghost /></ToolButton>
        <ToolButton><Can side="#fff" cap="#eee" hole /></ToolButton>
        <ToolButton $on><Can side="#b80d0d" cap="#8c0505" /></ToolButton>
        <VRule />
        <ToolButton><CutCan side="#1450a8" cap="#2f78d8" /></ToolButton>
        <ToolButton><CutCan side="#2f9a2a" cap="#8fc47a" rest /></ToolButton>
        <ToolButton><HalfBall /></ToolButton>
        <VRule />
        <ToolButton><BlueGem /></ToolButton>
        <Caret />
      </GhToolbar>
      <Canvas>
        <Drawing>
          <g transform={pan} stroke="#bbb7b0" strokeWidth="2">
            {VERTICALS.map((x) => <path key={x} d={`M${x} 290V1150`} />)}
            {HORIZONTALS.map((y) => <path key={y} d={`M0 ${y}H1880`} />)}
          </g>
        </Drawing>
        <Margin />
        <Drawing>
          <g transform={pan}>
            {WIRES.map((d) => <path key={d} d={d} fill="none" stroke="#57534f" strokeWidth="5" />)}
            <Compass x={1831} y={1101} />
          </g>
        </Drawing>
        <Scribble $x={837 - VIEW.x} $y={387 - VIEW.y}>Dimensions</Scribble>
        <Scribble $x={1492 - VIEW.x} $y={288 - VIEW.y}>Plane, footprint &amp; l</Scribble>
        <Slider x={790} y={480} name="Width" max={1000} start={240} />
        <Slider x={785} y={533} name="Height" max={1000} start={440} />
        <Slider x={787} y={591} name="Length" max={10000} start={4000} />
        <Slider x={455} y={732} name="Number Slider" max={100} start={11} />
        <Component x={1266} y={432} w={190} h={50} name="XY Plane" ins={['Origin']} outs={['Plane']} icon={<XyIcon />} />
        <Component x={1505} y={436} w={232} h={149} name="Rectangle" ins={['Plane', 'X Size', 'Y Size', 'Radius']} outs={['Rectangle', 'Length']} icon={<RectIcon />} />
        <Component x={896} y={702} w={237} h={114} name="Divide Curve" ins={['Curve', 'Count', 'Kinks']} outs={['Points', 'Tangents', 'Parameters']} icon={<DivideIcon />} />
        <Component x={259} y={684} w={89} h={44} name="Geometry" ins={['']} outs={['']} icon={<Hex />} />
        <Component x={462} y={834} w={272} h={149} name="Interpolate (t)" ins={['Vertices', 'Tangent Start', 'Tangent End', 'KnotStyle']} outs={['Curve', 'Length', 'Domain']} icon={<InterpIcon />} />
        <Palette><Beam s={36} /><Board s={36} /></Palette>
      </Canvas>
      <GhStatus>
        <Ico s={24} vb="0 0 24 24">
          <circle cx="12" cy="12" r="11" fill="#1d5cc0" stroke="#0b2c66" />
          <path d="M8 6v7q0 4 4 4t4-4V6M12 5v7M12 18v2" stroke="#cfe2ff" strokeWidth="2" />
        </Ico>
        Autosave complete (150 seconds ago)
        <Version>1.0.0007</Version>
      </GhStatus>
    </GhWindow>
  );
}

/* [top-left x, top y, top width, bottom-left x, bottom y] */
const RED_POSTS = [
  [361, 524, 9, 361, 590], [397, 523, 10, 396, 588], [335, 534, 9, 335, 601], [432, 532, 11, 429, 597], [327, 549, 10, 328, 618],
  [457, 547, 10, 450, 612], [324, 568, 12, 327, 640], [452, 567, 12, 446, 636], [306, 587, 12, 309, 661], [415, 588, 12, 414, 631],
  [431, 587, 13, 427, 657], [276, 604, 12, 281, 680], [237, 621, 12, 246, 698],
];
const CURVE_POINTS = [[257, 694], [292, 677], [319, 658], [336, 636], [338, 617], [345, 599], [368, 588], [387, 586], [403, 587], [435, 595], [458, 612], [455, 634], [437, 654], [424, 629]];

const PROPERTY_GROUPS = [
  ['Viewport', [['Title', 'Perspective'], ['Width', '1302', 'dim'], ['Height', '826', 'dim'], ['Projection', 'Perspective'], ['Locked', false]]],
  ['Camera', [['Lens Length(mm)', '50.0'], ['Rotation', '0.0'], ['X Location', '-20940.927'], ['Y Location', '20555.534'], ['Z Location', '22815.868'], ['Distance to Target', '40582.644', 'flat'], ['Location', null]]],
  ['Target', [['X Target', '3342.382'], ['Y Target', '2912.205'], ['Z Target', '-4496.854'], ['Location', null]]],
  ['Wallpaper', [['Filename', '(none)'], ['Show', true], ['Gray', true]]],
];

function Property({ group, row: [name, value, mode] }) {
  const id = `${group}-${name}`.replace(/\W+/g, '-');
  let field = <PropText id={id} defaultValue={value} $flat={mode === 'flat'} />;
  if (value === null) field = <PropPush id={id} />;
  if (typeof value === 'boolean') field = <PropCheck id={id} type="checkbox" defaultChecked={value} />;
  return (
    <PropRow $dim={mode === 'dim'}>
      <label htmlFor={id}>{name}</label>
      {field}
    </PropRow>
  );
}

function RedPost({ at: [x, y, w, bx, by] }) {
  return (
    <g stroke="#a31014" strokeWidth=".6" fill="#7d2f36" fillOpacity=".88">
      <path d={`M${x} ${y + 1}L${x + w * 0.8} ${y - 1}L${x + w} ${y + 1}L${bx + w} ${by - 3}L${bx + w * 0.3} ${by}L${bx} ${by - 2}Z`} />
      <path d={`M${x + w * 0.3} ${y + 3}L${bx + w * 0.3} ${by}M${x + w * 0.8} ${y - 1}L${bx + w * 0.8} ${by - 3}M${x} ${y + 1}L${x + w * 0.3} ${y + 3}L${x + w} ${y + 1}M${x + w * 0.55} ${y + 2}L${bx + w * 0.55} ${by - 1}`} fill="none" />
    </g>
  );
}

function Rhino() {
  return (
    <RhWindow>
      <CommandBar>
        <label htmlFor="command">Command:</label>
        <input id="command" />
        <Spinner>
          <button aria-label="Up"><svg width="8" height="4"><path d="M0 4l4-4 4 4z" /></svg></button>
          <button aria-label="Down"><svg width="8" height="4"><path d="M0 0l4 4 4-4z" /></svg></button>
        </Spinner>
      </CommandBar>
      <RhMain>
        <RhTools>
          {rhinoTools.map(([name, art, plain]) => (
            <RhTool key={name} aria-label={name} $plain={plain}>
              <Ico s={32}>{art}</Ico>
              {name === 'Trim' && <MoreTools>&gt;&gt;</MoreTools>}
            </RhTool>
          ))}
        </RhTools>
        <IfcPanel>
          <IfcTab>
            <IfcLogo s={26} />
            <Cog s={14} />
          </IfcTab>
          <IfcTree>IFC</IfcTree>
        </IfcPanel>
        <RhViewport>
          <RhScene>
            <Drawing viewBox="66.500 507.500 546.500 346.500" preserveAspectRatio="xMidYMid slice">
              {RED_POSTS.map((p) => <RedPost key={`${p[0]}-${p[1]}`} at={p} />)}
              <path d="M257 694L292 677Q308 670 319 658Q334 646 336 636Q339 626 338 617Q338 607 345 599Q354 590 368 588Q378 585 387 586L403 587Q420 589 435 595Q454 602 458 612Q460 624 455 634Q450 646 437 654" fill="none" stroke="#a81418" strokeWidth=".6" />
              {CURVE_POINTS.map(([x, y]) => <path key={`${x}-${y}`} d={`M${x - 2} ${y - 2}l4 4M${x + 2} ${y - 2}l-4 4`} stroke="#b00d10" strokeWidth="2" />)}
              <g stroke="#5d5c60" strokeWidth=".5" fill="#5d5c60">
                <path d="M89.500 831V818M89.500 831L79 823M89.500 831L75 837" />
                <g stroke="none" fontFamily="Noto Sans, sans-serif" fontSize="8">
                  <text x="91" y="817">z</text><text x="80" y="822">x</text><text x="76" y="838">y</text>
                </g>
              </g>
            </Drawing>
            <ViewLabel>Perspective <svg width="12" height="14"><path d="M1 0v14" stroke="#1c2340" /><path d="M4 5h8l-4 4z" fill="#1c2340" /></svg></ViewLabel>
          </RhScene>
          <ViewTabs>
            {['Perspective', 'Top', 'Front', 'Right'].map((t) => <ViewTab key={t} $active={t === 'Perspective'}>{t}</ViewTab>)}
            <ViewTab aria-label="Add view"><Ico s={10} vb="0 0 10 10"><path d="M4 1h2v3h3v2H6v3H4V6H1V4h3z" stroke="#888" /></Ico></ViewTab>
          </ViewTabs>
        </RhViewport>
        <Props>
          <PropsTitle>Properties: View properties</PropsTitle>
          <PropsTabs>
            <PropsTab $active aria-label="Properties">
              <Ico s={22} vb="0 0 22 22">
                <path d="M11 3a8 8 0 018 8" stroke="#e33b2e" strokeWidth="5" /><path d="M19 11a8 8 0 01-8 8" stroke="#3aa648" strokeWidth="5" />
                <path d="M11 19a8 8 0 01-8-8" stroke="#2d6be0" strokeWidth="5" /><path d="M3 11a8 8 0 018-8" stroke="#f2a31c" strokeWidth="5" />
                <circle cx="11" cy="11" r="6" fill="#fff" />
              </Ico>
            </PropsTab>
            <PropsTab aria-label="Layers"><Ico s={24} vb="0 0 24 24"><path d="M1 5l22 2v7l-11 9L1 12z" fill="#fff" stroke="#222" /><path d="M1 2l22 4-11 9z" fill="#e2382a" stroke="#222" /><path d="M2 12l10 9 11-8v3l-11 7z" fill="#2257b5" /></Ico></PropsTab>
            <PropsTab aria-label="Display"><Ico s={24} vb="0 0 24 24"><circle cx="11" cy="14" r="9" fill="#2f68d0" stroke="#123" /><circle cx="8" cy="11" r="3" fill="#b9d2ff" /><path d="M10 5l6-4h7v4l-7 2z" fill="#fff" stroke="#222" /></Ico></PropsTab>
            <PropsTab aria-label="Materials"><Ico s={24} vb="0 0 24 24"><path d="M2 18Q4 15 8 14L17 2q4 0 5 4L11 20q-5 3-9-2z" fill="#e6e0dc" stroke="#555" /><path d="M10 11l5-6 5 4-5 6z" fill="#b5501e" /></Ico></PropsTab>
            <PropsTab aria-label="Libraries"><Ico s={24} vb="0 0 24 24"><path d="M2 4h7l2 3h9v3H7L3 20H2z" fill="#d99420" stroke="#6b4300" /><path d="M7 10h16l-4 10H3z" fill="#fbc65a" stroke="#6b4300" /></Ico></PropsTab>
            <PropsTab aria-label="Help"><Ico s={24} vb="0 0 24 24"><rect x="1" y="2" width="22" height="20" fill="#fff" stroke="#333" /><path d="M1 2h22v4H1z" fill="#555" /><path d="M3 20q0-12 9-12t9 12z" fill="#2d6be0" /><path d="M9 12q3-4 5 0 0 2-2 3v3" stroke="#fff" strokeWidth="2" /></Ico></PropsTab>
            <PropsTab aria-label="Options"><Cog s={14} /></PropsTab>
          </PropsTabs>
          <PropsBody>
            <PropsKinds>
              <Kind $on aria-label="Camera"><Ico s={34}><path d="M2 9h8l3-4h9l3 4h7v18H2z" fill="#2a2a2a" stroke="#666" /><circle cx="18" cy="18" r="8" fill="#111" stroke="#aaa" strokeWidth="2" /><circle cx="18" cy="18" r="3" fill="#888" /></Ico></Kind>
              <Kind aria-label="Material"><Ico s={34}><circle cx="28" cy="6" r="4" fill="#3d62b8" /><circle cx="21" cy="13" r="6" fill="#2850b0" stroke="#123" /><circle cx="11" cy="22" r="9" fill="#2248a0" stroke="#0b1c48" /><circle cx="8" cy="19" r="3" fill="#a8c0f4" /></Ico></Kind>
              <Kind aria-label="Frame"><Ico s={36} vb="0 0 36 36"><rect x="2" y="3" width="32" height="30" fill="#a7c6e6" stroke="#666" strokeWidth="3" /><rect x="7" y="9" width="22" height="18" fill="#fff" stroke="#e8483a" strokeWidth="3" /></Ico></Kind>
            </PropsKinds>
            <PropsList>
              {PROPERTY_GROUPS.map(([group, rows]) => (
                <React.Fragment key={group}>
                  <PropsHead>{group}</PropsHead>
                  {rows.map((row) => <Property key={row[0]} group={group} row={row} />)}
                </React.Fragment>
              ))}
            </PropsList>
          </PropsBody>
        </Props>
      </RhMain>
    </RhWindow>
  );
}

/* [top-left x, top y, width, bottom-left x, bottom y] */
const POSTS = [
  [1153, 358, 10, 1152, 436], [1120, 363, 11, 1121, 443], [1195, 360, 10, 1191, 437], [1104, 372, 11, 1106, 459], [1233, 368, 11, 1228, 447],
  [1258, 381, 12, 1250, 465], [1090, 385, 12, 1094, 478], [1058, 398, 13, 1066, 497], [1251, 398, 13, 1242, 487], [1008, 410, 14, 1023, 515],
  [1223, 413, 14, 1216, 507], [945, 421, 15, 966, 531],
];

function Post({ at: [x, y, w, bx, by] }) {
  const k = w * 0.6;
  return (
    <g stroke="#38312e" strokeWidth=".5" strokeLinejoin="round">
      <path d={`M${x} ${y + 1}L${x + k} ${y + 3}L${bx + k} ${by}L${bx} ${by - 1}Z`} fill="#8d827c" />
      <path d={`M${x + k} ${y + 3}L${x + w} ${y}L${bx + w - 1} ${by - 3}L${bx + k} ${by}Z`} fill="#7c726d" />
      <path d={`M${x} ${y + 1}L${x + w * 0.4} ${y - 1}L${x + w} ${y}L${x + k} ${y + 3}Z`} fill="#9c928c" />
      <path d={`M${x + k / 2} ${y + 2}L${bx + k / 2} ${by}`} strokeWidth=".25" />
    </g>
  );
}

function Triad({ x, y, up, left, right }) {
  return (
    <g strokeWidth="1.100" fill="none">
      <path d={`M${x} ${y}L${x + left[0]} ${y + left[1]}`} stroke="#c81e14" />
      <path d={`M${x} ${y}L${x + right[0]} ${y + right[1]}`} stroke="#2878e6" strokeWidth="1.300" />
      <path d={`M${x} ${y}V${y - up}`} stroke="#13a313" />
      <path d={`M${x - 1.5} ${y - up + 3}L${x} ${y - up - 1}L${x + 1.5} ${y - up + 3}Z`} fill="#13a313" />
      <circle cx={x + left[0]} cy={y + left[1]} r="1" fill="#c81e14" />
      <circle cx={x + right[0]} cy={y + right[1]} r="1" fill="#2878e6" />
      <g fontFamily="Liberation Sans, sans-serif" fontSize="5">
        <text x={x - 1} y={y - up - 3} fill="#13a313">Z</text>
        <text x={x + left[0] - 4} y={y + left[1] - 2} fill="#a01818">X</text>
        <text x={x + right[0] - 6} y={y + right[1] + 3} fill="#2c5ec0">Y</text>
      </g>
    </g>
  );
}

const cadworkTools = [
  [{}, '2D-Ebene'],
  [{ $red: true, $spread: true }, <>Per<Cube kind="per" /></>],
  [{ $spread: true }, <>Axo<Cube /></>],
  [{}, 'Nullpunkt'],
  [{}, "X'-Y'-Z'"],
  [{ $half: true }, 'X'],
  [{ $half: true }, '-Y'],
  [{ $half: true }, 'Z'],
  [{ $half: true }, 'A'],
  [{}, '5'],
  [{}, <Orbit />],
  [{ $half: true }, <Cube />],
  [{ $half: true, $pressed: true }, <Cube kind="green" />],
  [{ $half: true }, <Cube kind="hidden" />],
  [{ $half: true }, <Cube kind="gold" />],
  [{ $half: true }, <Cube kind="dots" />],
  [{ $half: true }, <Gears s={32} />],
  [{ $red: true }, 'M Auto'],
  [{ $half: true }, <Lens kind="+" />],
  [{ $half: true }, <Lens kind="-" />],
  [{}, <Lens kind="back" />],
  [{}, <Lens kind="page" />],
  [{}, 'Ansicht'],
  [{}, <SawBlade />],
  [{}, 'Messen'],
];

const commands = [
  ['Aktivieren'], ['Hinzufügen'], ['Löschen'], null, ['Kopieren', '6'], ['Verschieben', '5'],
  ['Verbinden Gruppe', null, '#ff3b2f'], ['Trennen Gruppe', null, '#1c459c'],
  ['Strecken', '7'], ['Modifizieren', '1'], ['Schneiden/Schweissen', 'C/D'], ['Hilfslinien', '0'], ['Exportieren'],
];

const hints = [
  ['(L)', 'Aktivieren'], ['(M)', 'Shift'], ['(D)', 'Modifizieren'], ['9', 'Hilfslinien'], ['3', 'Clicken, drei Punkte'], ['0', 'Aktivieren (mit aktiviert)'],
  ['Strg+Alt', 'Rotieren'], ['Alt', '(L) Pan'], ['Strg', '(L) Ansicht rotieren'], ['Shift+Strg', '(L) Aktivieren'],
];

function Cadwork() {
  return (
    <CwWindow>
      <CwMenu>
        {['Datei', 'Bearbeiten', 'Anzeige', 'Fenster', 'Einstellungen', 'Extra', 'Hilfe'].map((t) => <button key={t}>{t}</button>)}
        <Spacer />
        <button aria-label="Notifications"><FaBell size={23} color="#f5a800" /></button>
      </CwMenu>
      <CwToolbar>
        <CwAction $rule $gap={28} $pad="0 6px 0 26px"><Plate><Magnifier /></Plate>pluginpath</CwAction>
        <CwAction $gap={38} $pad="0 0 0 14px"><WoodTool />extrude</CwAction>
        <CwAction aria-label="IFC"><Plate><IfcLogo s={38} /></Plate></CwAction>
        <CwAction aria-label="Python">
          <Plate>
            <svg width="34" height="34" viewBox="0 0 34 34">
              <defs><linearGradient id="py" x1="0" y1="0" x2="0" y2="1"><stop offset=".48" stopColor="#2f87d8" /><stop offset=".52" stopColor="#e8bd30" /></linearGradient></defs>
              <FaPython size={34} style={{ fill: 'url(#py)' }} />
            </svg>
          </Plate>
        </CwAction>
      </CwToolbar>
      <CwAttributes>
        <Build>Version 29 BETA <span>(2022)</span></Build>
        <Bevel $w={108}>Beschriftung</Bevel>
        <Bevel $w={51} aria-label="Einstellungen"><Gears s={32} c="#777" /></Bevel>
        <Preset>
          <select aria-label="3D-Einstellungen"><option>3D-Einstellungen</option></select>
          <Caret />
        </Preset>
        <Bevel $w={44}>User</Bevel>
        <AttrValue $w={227}>Holz-/Stahlbau</AttrValue>
        <Bevel $w={43}>HVA</Bevel>
        <AttrValue $w={46}>H</AttrValue>
        <Bevel $w={71}>Material</Bevel>
        <AttrValue $w={201} $small>Unbestimmt</AttrValue>
        <Bevel $w={125}>Geschoss/BMT</Bevel>
        <AttrValue $w={197}>Renovation+Anbau/OG2</AttrValue>
        <Bevel $w={63}>Einheit</Bevel>
        <AttrValue $w={12} />
        <AttrValue $w={47} $small>mm</AttrValue>
        <AttrValue $w={60} $small>Grad</AttrValue>
      </CwAttributes>
      <CwMain>
        <CwTools>
          {cadworkTools.map(([look, face], i) => <CwTool key={i} {...look}>{face}</CwTool>)}
        </CwTools>
        <CwCenter>
          <CwScene>
            <Drawing viewBox="831 51 613.500 791.700" preserveAspectRatio="xMidYMid slice">
              {POSTS.map((p) => <Post key={p[0]} at={p} />)}
              <Triad x={1217} y={475} up={15} left={[-10, -7]} right={[-17, 6]} />
              <Triad x={859} y={818} up={12} left={[-6, -5]} right={[-10, 3]} />
            </Drawing>
            <SceneName>Perspektive</SceneName>
          </CwScene>
          <Floors>
            <StackIcon><Ico s={16} vb="0 0 16 16"><path d="M4 5V2h8v7h-2M2 6h8v8H2zM2 9h8" stroke="#333" strokeWidth="2" /></Ico></StackIcon>
            {['UG', 'EG', 'OG', 'DG', 'Dach'].map((t) => <Floor key={t} $active={t === 'UG'}>{t}</Floor>)}
            <Floor $plus>+</Floor>
            <Spacer />
            <Bevel $w={34}>+</Bevel>
            <Bevel $w={34} aria-label="Einstellungen"><Gears s={24} /></Bevel>
          </Floors>
        </CwCenter>
        <CwCommands>
          <CommandList>
            {commands.map((c, i) => (c ? (
              <Command key={i} $red={c[0] === 'Verbinden Gruppe'}>
                <button>{c[0]}</button>
                {c[1] && <span>{c[1]}</span>}
                {c[2] && <CommandIcon><GroupIcon c={c[2]} /></CommandIcon>}
              </Command>
            ) : <CommandGap key={i} />))}
          </CommandList>
          <Info>
            <InfoTab>Info</InfoTab>
            <InfoBody />
          </Info>
        </CwCommands>
      </CwMain>
      <CwStatus>
        {hints.map(([k, t]) => <span key={k}>{k[0] === '(' ? k : <b>{k}</b>} {t}</span>)}
      </CwStatus>
    </CwWindow>
  );
}

export default function App() {
  return (
    <>
      <Global />
      <Desktop>
        <LeftHalf>
          <Backdrop />
          <Grasshopper />
          <Rhino />
        </LeftHalf>
        <Cadwork />
      </Desktop>
    </>
  );
}
